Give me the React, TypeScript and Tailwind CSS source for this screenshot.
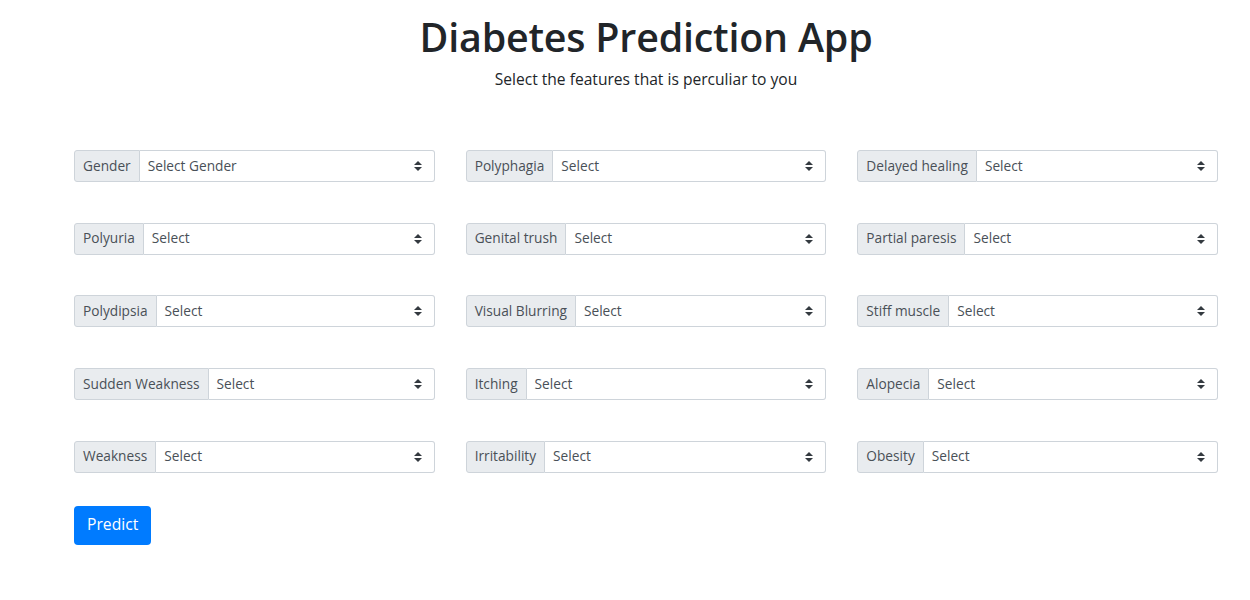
import { useState } from 'react';

const fields: { label: string; placeholder: string }[] = [
  { label: 'Gender', placeholder: 'Select Gender' },
  { label: 'Polyphagia', placeholder: 'Select' },
  { label: 'Delayed healing', placeholder: 'Select' },
  { label: 'Polyuria', placeholder: 'Select' },
  { label: 'Genital trush', placeholder: 'Select' },
  { label: 'Partial paresis', placeholder: 'Select' },
  { label: 'Polydipsia', placeholder: 'Select' },
  { label: 'Visual Blurring', placeholder: 'Select' },
  { label: 'Stiff muscle', placeholder: 'Select' },
  { label: 'Sudden Weakness', placeholder: 'Select' },
  { label: 'Itching', placeholder: 'Select' },
  { label: 'Alopecia', placeholder: 'Select' },
  { label: 'Weakness', placeholder: 'Select' },
  { label: 'Irritability', placeholder: 'Select' },
  { label: 'Obesity', placeholder: 'Select' },
];

function Arrows() {
  return (
    <svg width="8" height="10" viewBox="0 0 4 5" className="shrink-0">
      <path d="M2 0L0 2h4zm0 5L0 3h4z" fill="#343a40" />
    </svg>
  );
}

function SelectGroup({ label, placeholder }: { label: string; placeholder: string }) {
  const [value, setValue] = useState('');
  const options = label === 'Gender' ? ['Male', 'Female'] : ['Yes', 'No'];

  return (
    <div className="flex h-[32px] text-[13.7px] text-[#495057]">
      <span className="flex items-center px-2 bg-[#e9ecef] border border-[#ced4da] rounded-l-[3px] whitespace-nowrap">
        {label}
      </span>
      <label className="relative flex-1 flex items-center bg-white border border-l-0 border-[#ced4da] rounded-r-[3px] pl-2 pr-3">
        <span className="flex-1">{value || placeholder}</span>
        <Arrows />
        <select
          value={value}
          onChange={(e) => setValue(e.target.value)}
          className="absolute inset-0 opacity-0 cursor-pointer"
        >
          <option value="">{placeholder}</option>
          {options.map((o) => (
            <option key={o} value={o}>{o}</option>
          ))}
        </select>
      </label>
    </div>
  );
}

export default function App() {
  return (
    <div className="min-h-[600px] bg-white text-[#212529] pl-[74px] pr-[32px]" style={{ fontFamily: '"Open Sans", "Noto Sans", sans-serif' }}>
      {/* Header */}
      <div className="text-center pt-[13px]">
        <h1 className="text-[39.4px] font-semibold leading-[48px] tracking-[-0.2px]">Diabetes Prediction App</h1>
        <p className="text-[15.6px] leading-[24px] mt-[6px]">Select the features that is perculiar to you</p>
      </div>

      {/* Form */}
      <div className="grid grid-cols-3 gap-x-[31px] gap-y-[40.7px] mt-[59px]">
        {fields.map((f) => (
          <SelectGroup key={f.label} label={f.label} placeholder={f.placeholder} />
        ))}
      </div>

      <button className="mt-[33px] h-[39px] px-[13px] bg-[#007bff] text-white text-[15.7px] rounded-[4px] hover:bg-[#0069d9]">
        Predict
      </button>
    </div>
  );
}
